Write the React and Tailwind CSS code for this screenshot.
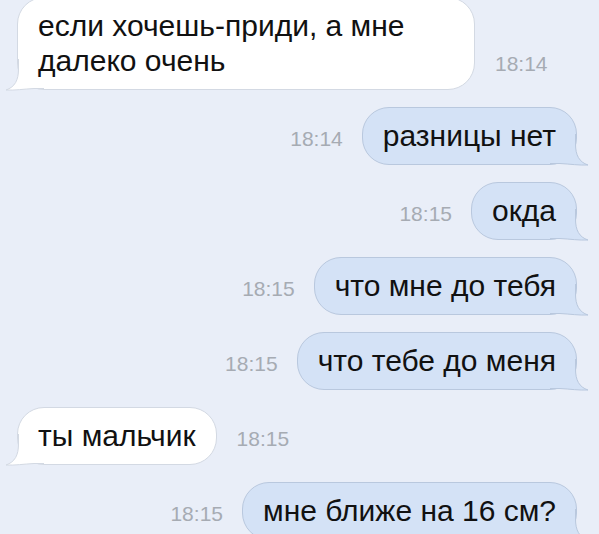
import React from 'react'

const font = { fontFamily: '"Liberation Sans", Arial, sans-serif' }

function Tail({ side }) {
  const out = side === 'out'
  return (
    <svg
      className={`pointer-events-none absolute bottom-[-2px] ${out ? 'right-[-13px]' : 'left-[-13px] -scale-x-100'}`}
      width="39"
      height="32"
      viewBox="0 0 39 32"
    >
      <path
        d="M0 0 L25.5 0 L25.5 10 C25.5 21 29 28 38 31 C29 31.5 20 30 10 29.5 L0 29.5 Z"
        fill={out ? '#d4e2f6' : '#ffffff'}
      />
      <path
        d="M25.5 0 L25.5 10 C25.5 21 29 28 38 31 C29 31.5 20 30 10 29.5 L0 29.5"
        fill="none"
        stroke={out ? '#b9c8de' : '#d3d9e3'}
        strokeWidth="1"
      />
    </svg>
  )
}

function Bubble({ side, className = '', children }) {
  const out = side === 'out'
  return (
    <div
      className={`relative rounded-[27px] border px-[20px] pt-[10px] pb-[11px] text-[30px] leading-[35px] text-[#111] ${
        out ? 'border-[#b9c8de] bg-[#d4e2f6]' : 'border-[#d3d9e3] bg-white'
      } ${className}`}
    >
      <Tail side={side} />
      <span className="relative z-10">{children}</span>
    </div>
  )
}

function Time({ children }) {
  return <span className="shrink-0 text-[21px] leading-none text-[#a6abb3]">{children}</span>
}

function Outgoing({ time, text }) {
  return (
    <div className="flex justify-end gap-[19px] pr-[22px] [align-items:last_baseline]">
      <Time>{time}</Time>
      <Bubble side="out">{text}</Bubble>
    </div>
  )
}

function Incoming({ time, text, className = '', first }) {
  return (
    <div className={`flex gap-[20px] pl-[17px] [align-items:last_baseline] ${first ? 'mt-[-3px]' : ''}`}>
      <Bubble side="in" className={className}>{text}</Bubble>
      <Time>{time}</Time>
    </div>
  )
}

export default function App() {
  return (
    <div className="h-[534px] w-[599px] overflow-hidden bg-[#e9eef8]" style={font}>
      <div className="flex flex-col gap-[17px]">
        <Incoming first className="w-[458px]" time="18:14" text="если хочешь-приди, а мне далеко очень" />
        <Outgoing time="18:14" text="разницы нет" />
        <Outgoing time="18:15" text="окда" />
        <Outgoing time="18:15" text="что мне до тебя" />
        <Outgoing time="18:15" text="что тебе до меня" />
        <Incoming time="18:15" text="ты мальчик" />
        <Outgoing time="18:15" text="мне ближе на 16 см?" />
      </div>
    </div>
  )
}
